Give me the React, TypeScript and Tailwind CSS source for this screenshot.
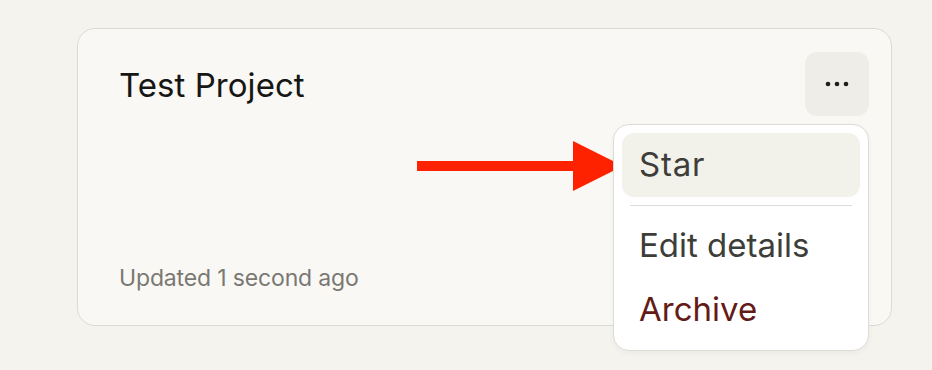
import React from 'react';

const font = { fontFamily: 'Inter, "Noto Sans", sans-serif' };

const MoreDots = () => (
  <svg width="24" height="8" viewBox="0 0 24 8" fill="#1f1e1d">
    <circle cx="3" cy="4" r="2.3" />
    <circle cx="12" cy="4" r="2.3" />
    <circle cx="21" cy="4" r="2.3" />
  </svg>
);

// red annotation arrow pointing at the Star item
const Arrow = () => (
  <svg
    className="absolute left-[417px] top-[141px]"
    width="206"
    height="50"
    viewBox="0 0 206 50"
    fill="#ff2200"
  >
    <rect x="0" y="20" width="160" height="10" />
    <polygon points="156,0 206,25 156,50" />
  </svg>
);

const MenuItem = ({ label, active, danger }: { label: string; active?: boolean; danger?: boolean }) => (
  <div
    className={`flex h-[64px] items-center rounded-[12px] px-[17px] text-[33px] ${
      active ? 'bg-[#f2f1ea] tracking-[0.8px]' : ''
    } ${danger ? 'text-[#631b16]' : 'text-[#3d3d3a]'}`}
  >
    {label}
  </div>
);

export default function App() {
  return (
    <div className="relative min-h-[370px] w-full bg-[#f4f3ee] pt-[28px] pl-[77px]" style={font}>
      <div className="relative flex h-[298px] w-[815px] flex-col rounded-[18px] border border-[#dcdad4] bg-[#f9f8f5] pb-[33px] pl-[41px] pr-[22px] pt-[23px]">
        <div className="flex items-start justify-between">
          <h2 className="mt-[13px] text-[33px] leading-[40px] tracking-[0.05px] text-[#161614]">Test Project</h2>
          <button className="flex h-[64px] w-[64px] items-center justify-center rounded-[12px] bg-[#efede7]">
            <MoreDots />
          </button>
        </div>
        <p className="mt-auto text-[23px] leading-[28px] tracking-[-0.15px] text-[#7a7873]">Updated 1 second ago</p>

        {/* dropdown menu, opened below the button */}
        <div className="absolute right-[22px] top-[95px] z-10 w-[256px] rounded-[16px] border border-[#dddbd6] bg-white p-2 shadow-[0_2px_6px_rgba(0,0,0,0.04)]">
          <MenuItem label="Star" active />
          <div className="mx-2 my-2 h-px bg-[#dddbd6]" />
          <MenuItem label="Edit details" />
          <MenuItem label="Archive" danger />
        </div>
      </div>
      <Arrow />
    </div>
  );
}
